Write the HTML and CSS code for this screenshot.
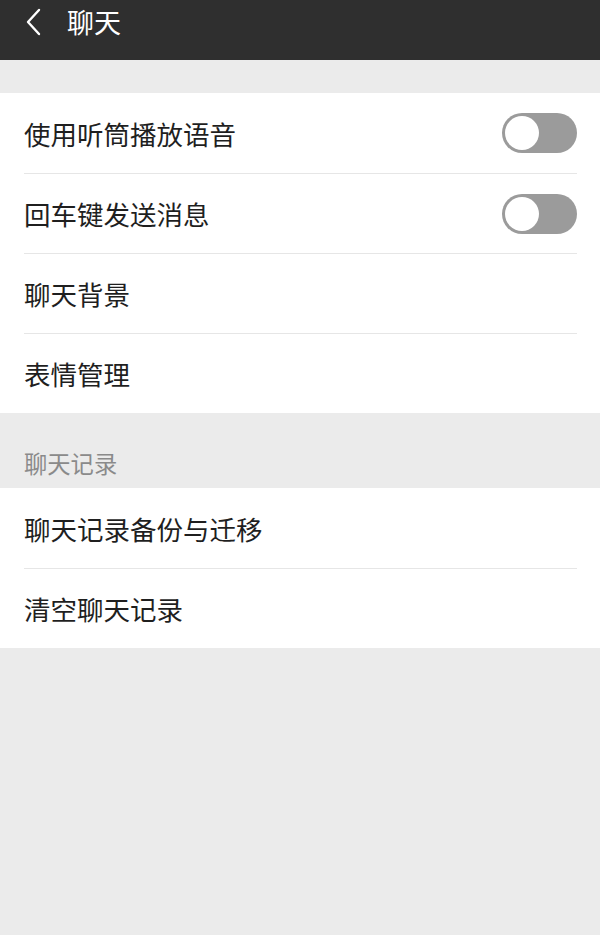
FILE: index.html
```html
<!DOCTYPE html>
<html lang="zh-CN">
<head>
    <meta charset="UTF-8">
    <meta name="viewport" content="width=device-width, initial-scale=1.0">
    <title>聊天</title>
    <link rel="stylesheet" href="styles.css">
</head>
<body>

<header class="topbar">
    <svg class="back" width="20" height="28" viewBox="0 0 20 28">
        <path d="M15 2 L4 14 L15 26" fill="none" stroke="#fff" stroke-width="2.4" stroke-linecap="round" stroke-linejoin="round"/>
    </svg>
    <h1>聊天</h1>
</header>

<div class="spacer"></div>

<ul class="group">
    <li class="row">
        <span>使用听筒播放语音</span>
        <span class="switch"><span class="knob"></span></span>
    </li>
    <li class="row">
        <span>回车键发送消息</span>
        <span class="switch"><span class="knob"></span></span>
    </li>
    <li class="row"><span>聊天背景</span></li>
    <li class="row"><span>表情管理</span></li>
</ul>

<div class="section-title">聊天记录</div>

<ul class="group">
    <li class="row"><span>聊天记录备份与迁移</span></li>
    <li class="row"><span>清空聊天记录</span></li>
</ul>

</body>
</html>
```

FILE: styles.css
```css
body {
    margin: 0;
    padding: 0;
    background: #ebebeb;
    color: #1f1f1f;
    font-family: "Noto Sans CJK SC", "Noto Sans", sans-serif;
    min-height: 935px;
}
.topbar {
    height: 60px;
    background: #2f2f2f;
    display: flex;
    align-items: flex-start;
    padding: 6px 0 0 24px;
    box-sizing: border-box;
}
.back {
    margin-top: 2px;
}
.topbar h1 {
    margin: 0 0 0 23px;
    color: #fff;
    font-size: 27px;
    font-weight: 400;
    line-height: 32px;
}
.spacer {
    height: 33px;
}
.group {
    list-style: none;
    margin: 0;
    padding: 0 23px 0 24px;
    background: #fff;
}
.row {
    height: 80px;
    display: flex;
    align-items: center;
    justify-content: space-between;
    font-size: 26.5px;
    border-top: 1px solid #e6e6e6;
    box-sizing: border-box;
}
.row:first-child {
    border-top: none;
}
.switch {
    width: 75px;
    height: 40px;
    border-radius: 20px;
    background: #9b9b9b;
    display: flex;
    align-items: center;
    padding: 0 3px;
    box-sizing: border-box;
}
.knob {
    width: 34px;
    height: 34px;
    border-radius: 50%;
    background: #fff;
}
.section-title {
    height: 75px;
    box-sizing: border-box;
    padding: 35px 0 0 24px;
    font-size: 23.3px;
    line-height: 30px;
    color: #8a8a8a;
}
```
